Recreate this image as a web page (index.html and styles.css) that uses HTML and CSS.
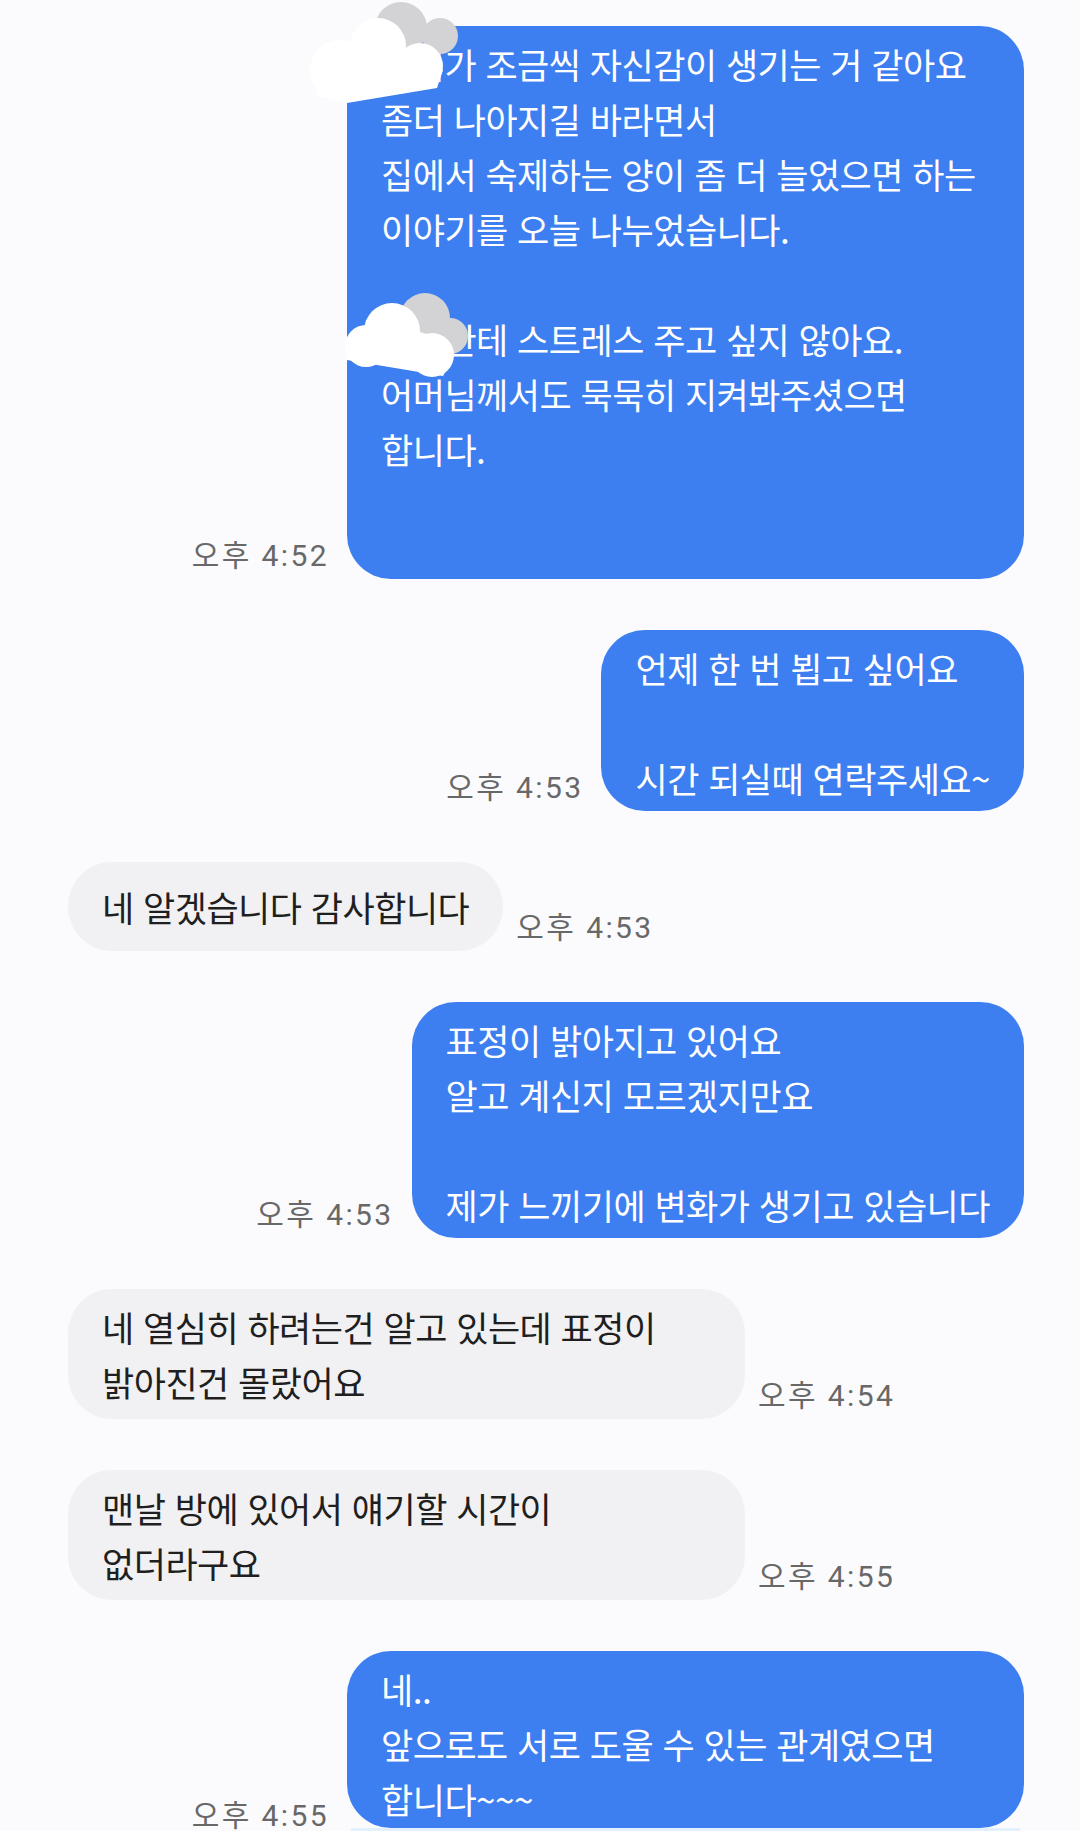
FILE: index.html
```html
<!DOCTYPE html>
<html lang="ko">
<head>
    <meta charset="UTF-8">
    <meta name="viewport" content="width=device-width, initial-scale=1.0">
    <title>대화</title>
    <link rel="stylesheet" href="styles.css">
</head>
<body>
    <div class="chat">
        <div class="row sent">
            <span class="time">오후 4:52</span>
            <div class="bubble blue wide tall">
                아이가 조금씩 자신감이 생기는 거 같아요<br>
                좀더 나아지길 바라면서<br>
                집에서 숙제하는 양이 좀 더 늘었으면 하는<br>
                이야기를 오늘 나누었습니다.<br>
                <br>
                아이한테 스트레스 주고 싶지 않아요.<br>
                어머님께서도 묵묵히 지켜봐주셨으면<br>
                합니다.
                <!-- stickers covering names -->
                <svg class="cloud cloud-top" viewBox="300 0 160 110" width="160" height="110">
                    <circle cx="401" cy="28" r="26" fill="#d3d3d6"/>
                    <circle cx="440" cy="36" r="18" fill="#d3d3d6"/>
                    <circle cx="378" cy="46" r="28" fill="#fff"/>
                    <circle cx="420" cy="66" r="23" fill="#fff"/>
                    <circle cx="340" cy="70" r="30" fill="#fff"/>
                    <polygon points="312,72 350,46 420,50 443,70 437,88 347,103 318,96" fill="#fff"/>
                </svg>
                <svg class="cloud cloud-mid" viewBox="340 290 130 95" width="130" height="95">
                    <circle cx="425" cy="318" r="25" fill="#d3d3d6"/>
                    <circle cx="450" cy="336" r="18" fill="#d3d3d6"/>
                    <circle cx="392" cy="331" r="28" fill="#fff"/>
                    <circle cx="366" cy="346" r="21" fill="#fff"/>
                    <circle cx="432" cy="355" r="22" fill="#fff"/>
                    <polygon points="345,350 380,320 430,335 452,360 443,376 347,360" fill="#fff"/>
                </svg>
            </div>
        </div>

        <div class="row sent">
            <span class="time">오후 4:53</span>
            <div class="bubble blue">
                언제 한 번 뵙고 싶어요<br>
                <br>
                시간 되실때 연락주세요~
            </div>
        </div>

        <div class="row recv">
            <div class="bubble gray short">네 알겠습니다 감사합니다</div>
            <span class="time">오후 4:53</span>
        </div>

        <div class="row sent">
            <span class="time">오후 4:53</span>
            <div class="bubble blue">
                표정이 밝아지고 있어요<br>
                알고 계신지 모르겠지만요<br>
                <br>
                제가 느끼기에 변화가 생기고 있습니다
            </div>
        </div>

        <div class="row recv">
            <div class="bubble gray wide">
                네 열심히 하려는건 알고 있는데 표정이<br>
                밝아진건 몰랐어요
            </div>
            <span class="time">오후 4:54</span>
        </div>

        <div class="row recv">
            <div class="bubble gray wide">
                맨날 방에 있어서 얘기할 시간이<br>
                없더라구요
            </div>
            <span class="time">오후 4:55</span>
        </div>

        <div class="row sent">
            <span class="time time-low">오후 4:55</span>
            <div class="bubble blue wide last">
                네..<br>
                앞으로도 서로 도울 수 있는 관계였으면<br>
                합니다~~~
            </div>
        </div>
    </div>
</body>
</html>
```

FILE: styles.css
```css
html, body {
    height: 100%;
}
body {
    margin: 0;
    background-color: #fbfbfd;
    font-family: "Noto Sans CJK KR", sans-serif;
    overflow: hidden;
}

.chat {
    display: flex;
    flex-direction: column;
    gap: 51px;
    padding: 26px 56px 0 68px;
}

.row {
    display: flex;
    align-items: flex-end;
}
.row.sent {
    justify-content: flex-end;
}

/* Timestamps next to bubbles */
.time {
    font-family: Roboto, "Noto Sans CJK KR", sans-serif;
    font-size: 30px;
    line-height: 36px;
    letter-spacing: 2.4px;
    color: #686868;
    white-space: nowrap;
    margin-bottom: 5px;
}
.row.sent .time {
    margin-right: 18px;
}
.row.recv .time {
    margin-left: 13px;
}
.time-low {
    margin-bottom: -6px;
}

/* Message bubbles */
.bubble {
    position: relative;
    box-sizing: border-box;
    max-width: 677px;
    padding: 10px 34px 6px;
    border-radius: 44px;
    font-size: 35px;
    line-height: 55px;
    letter-spacing: -0.5px;
    white-space: nowrap;
}
.bubble.blue {
    background-color: #3d7ef0;
    color: #fff;
}
.bubble.gray {
    background-color: #f1f1f3;
    color: #1f1f1f;
    padding: 10px 34px 10px;
}
.bubble.short {
    padding: 17px 34px;
}
.bubble.wide {
    width: 677px;
}
.bubble.tall {
    padding-bottom: 103px;
}
.bubble.last {
    padding-bottom: 2px;
}
.bubble.last::after {
    content: '';
    position: absolute;
    left: 4px;
    right: 4px;
    bottom: -6px;
    height: 6px;
    background-color: #e2f1fb;
}

/* Stickers that hide names */
.cloud {
    position: absolute;
}
.cloud-top {
    left: -47px;
    top: -26px;
}
.cloud-mid {
    left: -7px;
    top: 264px;
}
```
